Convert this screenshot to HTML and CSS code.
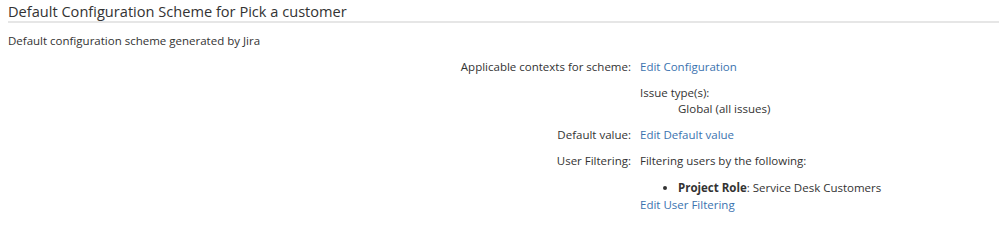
FILE: index.html
```html
<!DOCTYPE html>
<html lang="en">

<head>
  <meta charset="UTF-8">
  <title>Default Configuration Scheme</title>
  <link rel="stylesheet" href="styles.css">
</head>

<body>
  <div class="scheme">
    <h2 class="scheme-title">Default Configuration Scheme for Pick a customer</h2>
    <p class="scheme-desc">Default configuration scheme generated by Jira</p>

    <div class="fields">
      <div class="label">Applicable contexts for scheme:</div>
      <div class="value">
        <a href="#">Edit Configuration</a>
      </div>

      <div class="label"></div>
      <div class="value">
        <div>Issue type(s):</div>
        <div class="indent">Global (all issues)</div>
      </div>

      <div class="label">Default value:</div>
      <div class="value">
        <a href="#">Edit Default value</a>
      </div>

      <div class="label">User Filtering:</div>
      <div class="value">
        <div>Filtering users by the following:</div>
        <ul class="filters">
          <li><strong>Project Role</strong>: Service Desk Customers</li>
        </ul>
        <a href="#">Edit User Filtering</a>
      </div>
    </div>
  </div>
</body>

</html>
```

FILE: styles.css
```css
body {
  margin: 0;
  font-family: "Open Sans", "Noto Sans", sans-serif;
  font-size: 11.5px;
  line-height: 16px;
  color: #333;
  background: #fff;
}

.scheme {
  padding-left: 8px;
}

.scheme-title {
  margin: 0;
  padding-top: 1px;
  font-size: 14.6px;
  font-weight: 500;
  line-height: 20px;
  color: #333;
  border-bottom: 2px solid #e6e6e6;
}

.scheme-desc {
  margin: 10px 0 10px;
}

.fields {
  display: grid;
  grid-template-columns: 623px 1fr;
  column-gap: 9px;
  row-gap: 10px;
}

.label {
  text-align: right;
}

.indent {
  padding-left: 38px;
}

.filters {
  margin: 10px 0 0;
  padding-left: 38px;
  line-height: 18px;
}

a {
  color: #3b73af;
  text-decoration: none;
}
```
